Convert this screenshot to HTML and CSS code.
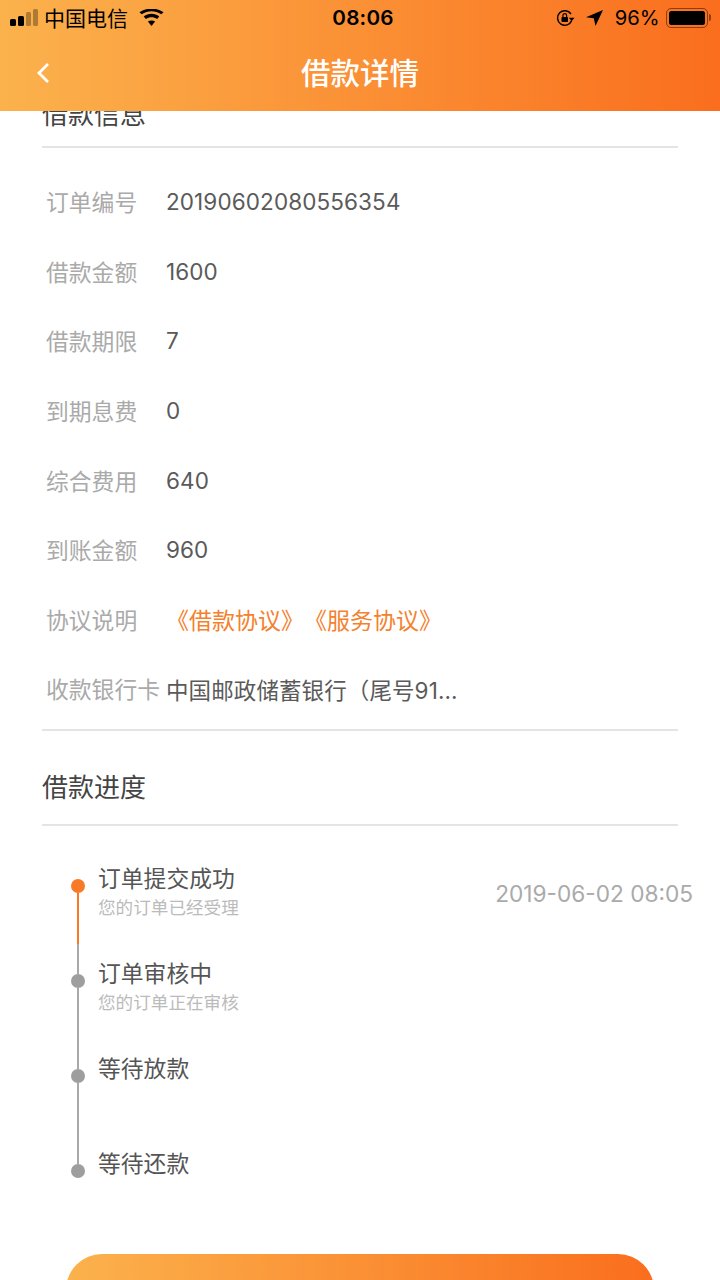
FILE: index.html
```html
<!DOCTYPE html>
<html lang="zh-CN">
<head>
<meta charset="utf-8">
<title>借款详情</title>
<link rel="stylesheet" href="styles.css">
</head>
<body>
<div class="screen">
  <header class="top">
    <div class="status">
      <div class="status-left">
        <svg class="signal" width="28" height="17" viewBox="0 0 28 17"><rect x="0" y="10" width="6" height="7" rx="1.500" fill="#000"/><rect x="8" y="7" width="6" height="10" rx="1.500" fill="#000"/><rect x="16" y="3" width="5" height="14" rx="1.500" fill="#000" opacity=".3"/><rect x="23" y="0" width="5" height="17" rx="1.500" fill="#000" opacity=".3"/></svg>
        <span class="carrier">中国电信</span>
        <svg class="wifi" width="25" height="17" viewBox="0 0 25 17"><path d="M12.500 17l-3.600-4.400c2-1.600 5.200-1.600 7.200 0z" fill="#000"/><path d="M6.900 10.100l-2.200-2.700c4.500-3.600 11.100-3.600 15.600 0l-2.200 2.700c-3.300-2.600-7.900-2.600-11.200 0z" fill="#000"/><path d="M2.800 5.200L.4 3.300C7.300-1.600 17.700-1.600 24.600 3.300l-2.400 1.900C16.500 1.100 8.500 1.100 2.800 5.200z" fill="#000"/></svg>
      </div>
      <div class="clock">08:06</div>
      <div class="status-right">
        <svg class="rot" width="19" height="18" viewBox="0 0 19 18"><path d="M15.700 11.500A7.300 7.300 0 1 1 15 5" fill="none" stroke="#000" stroke-width="1.500"/><path d="M12.800 8.700h5.800l-2.900 3.300z" fill="#000"/><rect x="5.500" y="8" width="6.500" height="5" rx=".8" fill="#000"/><path d="M6.900 8V6.400a1.850 1.850 0 0 1 3.700 0V8" fill="none" stroke="#000" stroke-width="1.200"/></svg>
        <svg class="loc" width="17" height="16" viewBox="0 0 17 16"><path d="M17 0L0 7.300l7.800.9L9.500 16z" fill="#000"/></svg>
        <span class="pct">96%</span>
        <div class="battery"><div class="battery-fill"></div></div>
        <div class="nub"></div>
      </div>
    </div>
    <div class="nav">
      <svg class="back" width="14" height="22" viewBox="0 0 14 22"><path d="M12 2L3 11l9 9" fill="none" stroke="#fff" stroke-width="2.800"/></svg>
      <h1 class="nav-title">借款详情</h1>
    </div>
  </header>

  <main class="content">
    <section class="info">
      <h2 class="section-title clipped">借款信息</h2>
      <dl class="rows">
        <div class="row"><dt>订单编号</dt><dd>20190602080556354</dd></div>
        <div class="row"><dt>借款金额</dt><dd>1600</dd></div>
        <div class="row"><dt>借款期限</dt><dd>7</dd></div>
        <div class="row"><dt>到期息费</dt><dd>0</dd></div>
        <div class="row"><dt>综合费用</dt><dd>640</dd></div>
        <div class="row"><dt>到账金额</dt><dd>960</dd></div>
        <div class="row"><dt>协议说明</dt><dd class="links">《借款协议》《服务协议》</dd></div>
        <div class="row"><dt>收款银行卡</dt><dd>中国邮政储蓄银行（尾号91...</dd></div>
      </dl>
    </section>

    <section class="progress">
      <h2 class="section-title">借款进度</h2>
      <ol class="steps">
        <li class="step done">
          <div class="rail"><span class="dot"></span><span class="line"></span></div>
          <div class="step-text"><div class="step-title">订单提交成功</div><div class="step-sub">您的订单已经受理</div></div>
          <div class="step-time">2019-06-02 08:05</div>
        </li>
        <li class="step">
          <div class="rail"><span class="dot"></span><span class="line"></span></div>
          <div class="step-text"><div class="step-title">订单审核中</div><div class="step-sub">您的订单正在审核</div></div>
        </li>
        <li class="step">
          <div class="rail"><span class="dot"></span><span class="line"></span></div>
          <div class="step-text"><div class="step-title">等待放款</div></div>
        </li>
        <li class="step last">
          <div class="rail"><span class="dot"></span></div>
          <div class="step-text"><div class="step-title">等待还款</div></div>
        </li>
      </ol>
    </section>
    <div class="cta"></div>
  </main>
</div>
</body>
</html>
```
FILE: styles.css
```css
* { box-sizing: border-box; }
html, body { margin: 0; padding: 0; background: #fff; }
body { font-family: "Inter", "Noto Sans CJK SC", sans-serif; }
.screen { width: 720px; height: 1280px; overflow: hidden; display: flex; flex-direction: column; background: #fff; }

.top { height: 111px; flex: none; position: relative; z-index: 2; background: linear-gradient(90deg, #fbb24c 0%, #fa6e1e 100%); }
.status { height: 35px; display: grid; grid-template-columns: 1fr auto 1fr; align-items: center; color: #000; }
.status-left { display: flex; align-items: center; padding-left: 10px; }
.carrier { font-size: 21px; margin-left: 6px; line-height: 35px; font-family: "Noto Sans CJK SC", sans-serif; }
.wifi { margin-left: 11px; }
.clock { font-size: 20.700px; font-weight: 600; margin-left: 6px; letter-spacing: .2px; }
.status-right { display: flex; align-items: center; justify-content: flex-end; padding-right: 9px; }
.rot { margin-right: 11px; }
.loc { margin-right: 12px; }
.pct { font-size: 20.200px; margin-right: 6px; }
.battery { width: 42px; height: 20px; border: 1.500px solid rgba(0,0,0,.45); border-radius: 5px; padding: 2px; }
.battery-fill { width: 100%; height: 100%; background: #000; border-radius: 2.500px; }
.nub { width: 2.500px; height: 7px; background: rgba(0,0,0,.45); border-radius: 0 2px 2px 0; margin-left: 1px; }

.nav { height: 76px; display: flex; align-items: flex-start; justify-content: center; position: relative; }
.back { position: absolute; left: 36px; top: 27px; }
.nav-title { margin: 0; font-size: 29.500px; font-weight: 500; color: #fff; font-family: "Noto Sans CJK SC", sans-serif; line-height: 72px; }

.content { flex: none; margin-top: -19px; }
.section-title { margin: 0 42px; height: 72px; line-height: 64px; font-size: 26px; font-weight: 400; color: #444; border-bottom: 2px solid #e4e4e4; font-family: "Noto Sans CJK SC", sans-serif; }
.section-title.clipped { height: 56px; line-height: 42px; }
.rows { margin: 0 42px; padding: 19px 0 5px; border-bottom: 2px solid #e4e4e4; }
.row { height: 69.600px; display: flex; align-items: center; margin: 0; padding-left: 4px; }
.row dt { width: 120px; flex: none; color: #aaa; font-family: "Noto Sans CJK SC", sans-serif; font-size: 22.800px; }
.row dd { margin: 0; color: #5a5a5a; font-size: 22.500px; letter-spacing: .1px; }
.row .links { color: #f4812d; font-family: "Noto Sans CJK SC", sans-serif; font-size: 23px; letter-spacing: 0; text-spacing-trim: space-all; font-feature-settings: "palt" 0; }

.progress { padding-top: 23px; }
.steps { list-style: none; margin: 0; padding: 37px 27px 0 70px; }
.step { display: flex; height: 95px; }
.rail { width: 16px; flex: none; display: flex; flex-direction: column; align-items: center; margin-right: 12px; }
.dot { width: 14px; height: 14px; border-radius: 50%; background: #9e9e9e; margin-top: 16px; flex: none; }
.line { width: 2px; flex: 1; background: #a9a9a9; margin-bottom: -16px; }
.done .dot { background: #f97a26; }
.done .line { background: linear-gradient(180deg, #f97a26 0, #f97a26 51px, #a9a9a9 51px); }
.step-text { flex: 1; }
.step-title { font-size: 22.800px; line-height: 30px; color: #555; font-family: "Noto Sans CJK SC", sans-serif; }
.step-sub { font-size: 17.600px; line-height: 28px; color: #bbb; font-family: "Noto Sans CJK SC", sans-serif; }
.step-time { font-size: 22.650px; color: #aaa; padding-top: 17px; white-space: nowrap; }

.cta { height: 90px; margin: 11px 66px 0; border-radius: 36px; background: linear-gradient(90deg, #fbb24c 0%, #fa6e1e 100%); }
```
